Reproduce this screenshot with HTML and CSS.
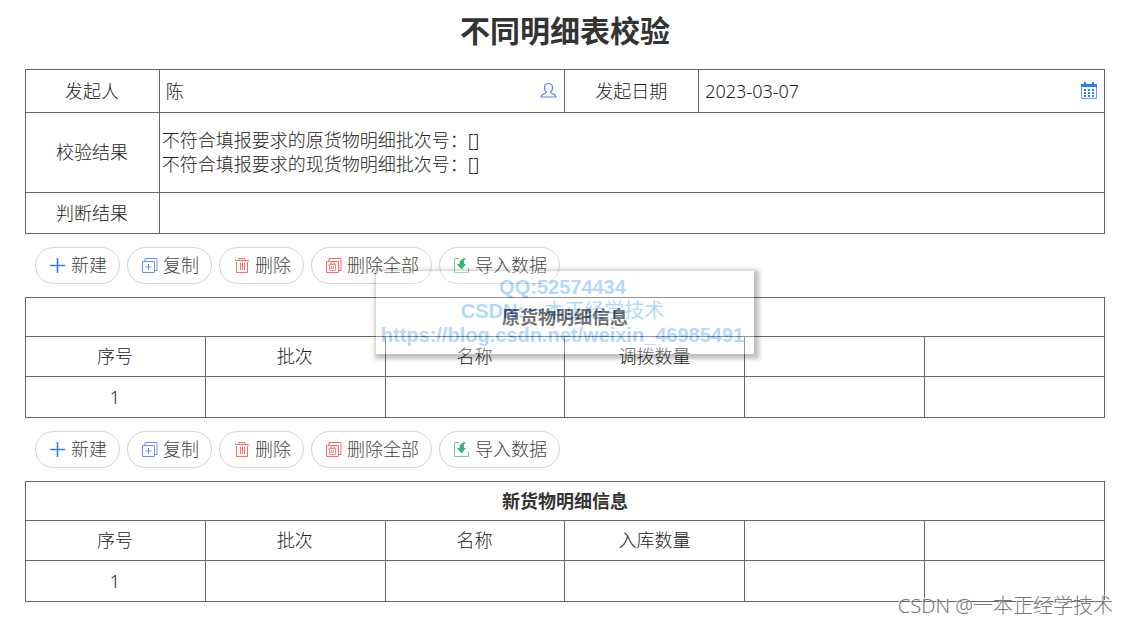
FILE: index.html
```html
<!DOCTYPE html>
<html lang="zh-CN">
<head>
<meta charset="utf-8">
<title>不同明细表校验</title>
<link rel="stylesheet" href="styles.css">
</head>
<body>
<svg class="sprite" aria-hidden="true">
  <symbol id="plus" viewBox="0 0 17 17"><path d="M8.5 1v15M1 8.5h15" fill="none" stroke="#2f7cf6" stroke-width="1.6"/></symbol>
  <symbol id="copy" viewBox="0 0 17 17"><path d="M1.5 4.5h12v11h-12zM4 4V1.500h12v12h-2.500M7.500 7v6M4.500 10h6" fill="none" stroke="#6a90f0"/></symbol>
  <symbol id="trash" viewBox="0 0 17 17"><path d="M2 3.500h14M6 3V1.500h6V3M3.500 5v10.500h11V5M7.500 6v7M9.500 6v7M11.500 6v7" fill="none" stroke="#ff6b6b"/></symbol>
  <symbol id="trash-all" viewBox="0 0 17 17"><path d="M1.500 4.500h12v11h-12zM4 4V1.500h12v12h-2.500" fill="none" stroke="#ff6868"/><path d="M3.500 7.500h8M5.500 7V6h4v1M4.500 8v5.500h6V8M6.500 9v3M8.500 9v3" fill="none" stroke="#ff8a80"/></symbol>
  <symbol id="import" viewBox="0 0 17 17"><path d="M6 1.500H1.500v14h14V11" fill="none" stroke="#69cfa7"/><path d="M13 1C9 1 6.500 3.500 6.500 7H4L8.500 12.500 13 7H11C10.500 4.500 11 2.500 13 1z" fill="#35b57c"/></symbol>
  <symbol id="user" viewBox="0 0 17 17"><path d="M6.500 10C3.500 7.500 3.500 1.500 8.500 1.500S13.500 7.500 10.500 10c0 2 5.500 1.500 5.500 5H1c0-3.500 5.500-3 5.500-5z" fill="none" stroke="#4e83f3" stroke-width="1.200"/></symbol>
  <symbol id="calendar" viewBox="0 0 17 17"><path d="M1 2h16v3H1zM4 0h2v4H4zM12 0h2v4h-2z" fill="#2680ee"/><path d="M1.500 5v11.500h15V5" fill="none" stroke="#6a9cf5"/><path d="M4 8h10M4 11h10M4 14h10" stroke="#2680ee" stroke-width="2" stroke-dasharray="2 2"/></symbol>
</svg>
<main class="page">
  <h1 class="title">不同明细表校验</h1>
  <table class="grid summary">
    <colgroup><col class="col-label"><col class="col-value"><col class="col-label"><col class="col-value"></colgroup>
    <tr class="row-field">
      <th scope="row"><label for="starter">发起人</label></th>
      <td><div class="field"><input id="starter" type="text" value="陈"><button class="pick" type="button" aria-label="选择人员"><svg class="icon"><use href="#user"/></svg></button></div></td>
      <th scope="row"><label for="date">发起日期</label></th>
      <td><div class="field"><input id="date" type="text" value="2023-03-07"><button class="pick" type="button" aria-label="选择日期"><svg class="icon"><use href="#calendar"/></svg></button></div></td>
    </tr>
    <tr class="row-result">
      <th scope="row">校验结果</th>
      <td colspan="3" class="result">不符合填报要求的原货物明细批次号：[]<br>不符合填报要求的现货物明细批次号：[]</td>
    </tr>
    <tr class="row-verdict"><th scope="row">判断结果</th><td colspan="3"></td></tr>
  </table>

  <div class="toolbar">
    <button class="action" type="button"><svg class="icon"><use href="#plus"/></svg>新建</button>
    <button class="action" type="button"><svg class="icon"><use href="#copy"/></svg>复制</button>
    <button class="action" type="button"><svg class="icon"><use href="#trash"/></svg>删除</button>
    <button class="action" type="button"><svg class="icon"><use href="#trash-all"/></svg>删除全部</button>
    <button class="action" type="button"><svg class="icon"><use href="#import"/></svg>导入数据</button>
  </div>
  <section class="detail">
    <table class="grid">
      <tr class="row-caption"><th colspan="6" class="caption">原货物明细信息</th></tr>
      <tr class="row-head"><th>序号</th><th>批次</th><th>名称</th><th>调拨数量</th><th></th><th></th></tr>
      <tr class="row-verdict"><td>1</td><td></td><td></td><td></td><td></td><td></td></tr>
    </table>
    <div class="contact">QQ:52574434<br>CSDN:<span class="contact-name">一本正经学技术</span><br>https://blog.csdn.net/weixin_46985491</div>
  </section>

  <div class="toolbar">
    <button class="action" type="button"><svg class="icon"><use href="#plus"/></svg>新建</button>
    <button class="action" type="button"><svg class="icon"><use href="#copy"/></svg>复制</button>
    <button class="action" type="button"><svg class="icon"><use href="#trash"/></svg>删除</button>
    <button class="action" type="button"><svg class="icon"><use href="#trash-all"/></svg>删除全部</button>
    <button class="action" type="button"><svg class="icon"><use href="#import"/></svg>导入数据</button>
  </div>
  <section class="detail">
    <table class="grid">
      <tr class="row-caption"><th colspan="6" class="caption">新货物明细信息</th></tr>
      <tr class="row-head"><th>序号</th><th>批次</th><th>名称</th><th>入库数量</th><th></th><th></th></tr>
      <tr class="row-verdict"><td>1</td><td></td><td></td><td></td><td></td><td></td></tr>
    </table>
  </section>
</main>
<div class="credit">CSDN @一本正经学技术</div>
</body>
</html>
```
FILE: styles.css
```css
* { box-sizing: border-box; }
body {
  margin: 0;
  background: #fff;
  color: #222;
  font: 300 18px/24px "Noto Sans", "Noto Sans CJK SC", sans-serif;
}
button, input { font: inherit; color: inherit; }
.sprite { display: none; }
.icon { width: 17px; height: 17px; flex: none; }
.page { padding: 9px 23px 0 25px; }
.title {
  margin: 0 0 16px;
  color: #333;
  text-align: center;
  font-size: 30px;
  line-height: 44px;
  font-weight: 700;
}

.grid {
  width: 100%;
  table-layout: fixed;
  border-collapse: collapse;
}
.grid th, .grid td {
  padding: 0 1px 1px 0;
  border: 1px solid #666;
  font-weight: 300;
  text-align: center;
}
.grid .caption { padding: 0; color: #333; font-weight: 700; }
.grid .result { padding: 0 2px 1px; text-align: left; }
.col-label { width: 12.4%; }
.col-value { width: 37.6%; }
.row-field { height: 43px; }
.row-result { height: 80px; }
.row-verdict { height: 41px; }
.row-caption { height: 39px; }
.row-head { height: 40px; }

.field { display: flex; align-items: center; padding: 0 6px; }
.field input {
  flex: 1;
  min-width: 0;
  padding: 0;
  border: 0;
  outline: 0;
  background: none;
}
.pick { display: flex; padding: 0; border: 0; background: none; }

.toolbar { display: flex; gap: 7px; padding: 13px 10px; }
.action {
  display: flex;
  align-items: center;
  gap: 5px;
  height: 37px;
  padding: 0 12px 1px 13px;
  border: 1px solid #d3d3d3;
  border-radius: 19px;
  background: #fff;
  color: #444;
}

.detail { position: relative; }
.contact {
  position: absolute;
  top: -26px;
  left: 50%;
  width: 378px;
  padding: 4px 5px 7px 0;
  transform: translateX(-50%);
  background: #fff;
  box-shadow: 2px 2px 4px 3px #333;
  opacity: .3;
  color: #007fff;
  font: 700 20px/24px "Liberation Sans", "Noto Sans CJK SC", sans-serif;
  text-align: center;
  white-space: nowrap;
}
.contact-name { font-weight: 400; }

.credit {
  position: absolute;
  right: 15px;
  bottom: 5px;
  color: #777;
  font: 300 20px/28px "Noto Sans", "Noto Sans CJK SC", sans-serif;
  text-shadow: -1px -1px 0 #fff;
}
```
